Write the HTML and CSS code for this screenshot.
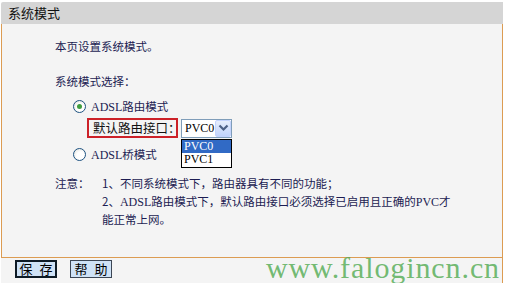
FILE: index.html
```html
<!DOCTYPE html>
<html lang="zh-CN">
<head>
<meta charset="utf-8">
<title>系统模式</title>
<link rel="stylesheet" href="styles.css">
</head>
<body>
<div class="page">
  <div class="header">系统模式</div>
  <div class="content">
    <div class="row intro">本页设置系统模式。</div>
    <div class="row title">系统模式选择：</div>
    <div class="row radio-row first">
      <span class="radio checked"></span>
      <span class="lbl"><span class="latin">ADSL</span>路由模式</span>
    </div>
    <div class="iface-row">
      <span class="redbox">默认路由接口：</span>
      <div class="combo">
        <span class="combo-val latin">PVC0</span>
        <span class="combo-btn">
          <svg width="11" height="8" viewBox="0 0 11 8"><path d="M1.5 1.5 L5.5 5.5 L9.5 1.5" fill="none" stroke="#4d6185" stroke-width="2.2"/></svg>
        </span>
        <div class="dropdown">
          <div class="opt sel latin">PVC0</div>
          <div class="opt latin">PVC1</div>
        </div>
      </div>
    </div>
    <div class="row radio-row second">
      <span class="radio"></span>
      <span class="lbl"><span class="latin">ADSL</span>桥模式</span>
    </div>
    <div class="note">
      <div class="note-label">注意：</div>
      <div class="note-text">
        <div>1、不同系统模式下，路由器具有不同的功能；</div>
        <div>2、<span class="latin">ADSL</span>路由模式下，默认路由接口必须选择已启用且正确的<span class="latin">PVC</span>才<br>能正常上网。</div>
      </div>
    </div>
  </div>
  <div class="footer">
    <button class="btn focus"><span>保</span><span>存</span></button>
    <button class="btn"><span>帮</span><span>助</span></button>
    <div class="watermark">www.falogincn.cn</div>
  </div>
</div>
</body>
</html>
```

FILE: styles.css
```css
html, body {
  margin: 0;
  padding: 0;
  background: #ffffff;
  width: 505px;
  height: 283px;
  overflow: hidden;
}

body {
  font-family: "Noto Sans CJK SC", "Liberation Sans", sans-serif;
  font-size: 11.5px;
  color: #1c1c52;
}

.latin {
  font-family: "Liberation Serif", "Noto Sans CJK SC", serif;
  font-size: 12px;
}

.page {
  position: relative;
  margin: 2px 2px 0 1px;
  height: 281px;
  display: flex;
  flex-direction: column;
}

.header {
  height: 22px;
  line-height: 22px;
  background: #d5d5d5;
  color: #111111;
  font-size: 13px;
  padding-left: 7px;
  border-radius: 2px 0 0 0;
}

.content {
  background: #f4f4f4;
  border-left: 1px solid #dc9c52;
  border-right: 1px solid #dc9c52;
  border-bottom: 1px solid #dc9c52;
  padding-left: 53px;
  box-sizing: border-box;
  height: 234px;
  padding-top: 14px;
}

.row {
  height: 16px;
  line-height: 16px;
  white-space: nowrap;
}

.title {
  margin-top: 19px;
}

.radio-row {
  display: flex;
  align-items: center;
  padding-left: 18px;
}

.radio-row.first {
  margin-top: 9px;
}

.radio-row.second {
  margin-top: 8px;
}

.radio {
  width: 11px;
  height: 11px;
  border: 1px solid #1d5281;
  border-radius: 50%;
  background: radial-gradient(circle at 60% 60%, #ffffff 40%, #dcdcd4 100%);
  box-sizing: content-box;
  position: relative;
  margin-right: 5px;
}

.radio.checked::after {
  content: "";
  position: absolute;
  left: 3px;
  top: 3px;
  width: 5px;
  height: 5px;
  border-radius: 50%;
  background: #3f9d3f;
}

.iface-row {
  display: flex;
  align-items: center;
  margin-top: 4px;
  padding-left: 32px;
  height: 20px;
}

.redbox {
  height: 20px;
  box-sizing: border-box;
  border: 2px solid #cc2128;
  line-height: 16px;
  padding: 0 0 0 4px;
  width: 91px;
  font-size: 12.5px;
  white-space: nowrap;
  color: #111111;
}

.combo {
  position: relative;
  margin-left: 3px;
  width: 51px;
  height: 19px;
  box-sizing: border-box;
  border: 1px solid #7f9db9;
  background: #ffffff;
  display: flex;
  align-items: center;
  justify-content: space-between;
}

.combo-val {
  padding-left: 3px;
  color: #000000;
}

.combo-btn {
  width: 16px;
  height: 17px;
  box-sizing: border-box;
  border: 1px solid #c3d3fd;
  background: linear-gradient(#e6eefc, #c1d3fb);
  border-radius: 2px;
  display: flex;
  align-items: center;
  justify-content: center;
}

.dropdown {
  position: absolute;
  left: -1px;
  top: 19px;
  width: 51px;
  box-sizing: border-box;
  border: 1px solid #000000;
  background: #ffffff;
}

.opt {
  height: 13.5px;
  line-height: 13.5px;
  padding-left: 2px;
  color: #000000;
}

.opt.sel {
  background: #316ac5;
  color: #ffffff;
}

.note {
  display: flex;
  margin-top: 13px;
  line-height: 17.5px;
  white-space: nowrap;
}

.note-label {
  width: 47px;
}

.footer {
  position: relative;
  flex: 1;
  background: #f4f4f4;
  border-right: 1px solid #dc9c52;
  display: flex;
  align-items: flex-start;
  padding: 2px 0 0 14px;
  gap: 13px;
}

.btn {
  width: 42px;
  height: 18px;
  padding: 0;
  margin: 0;
  display: flex;
  align-items: center;
  justify-content: center;
  gap: 7px;
  font-family: "Noto Sans CJK SC", sans-serif;
  font-size: 13px;
  line-height: 14px;
  color: #000000;
  background: #cfe2f6;
  border: 1px solid #3c4654;
  box-sizing: border-box;
}

.btn.focus {
  border: 2px solid #0e1b26;
}

.watermark {
  position: absolute;
  right: 2px;
  bottom: 0;
  font-family: "Liberation Serif", serif;
  font-size: 30px;
  line-height: 30px;
  color: rgba(80, 170, 80, 0.8);
  letter-spacing: 0.9px;
  white-space: nowrap;
}
```
